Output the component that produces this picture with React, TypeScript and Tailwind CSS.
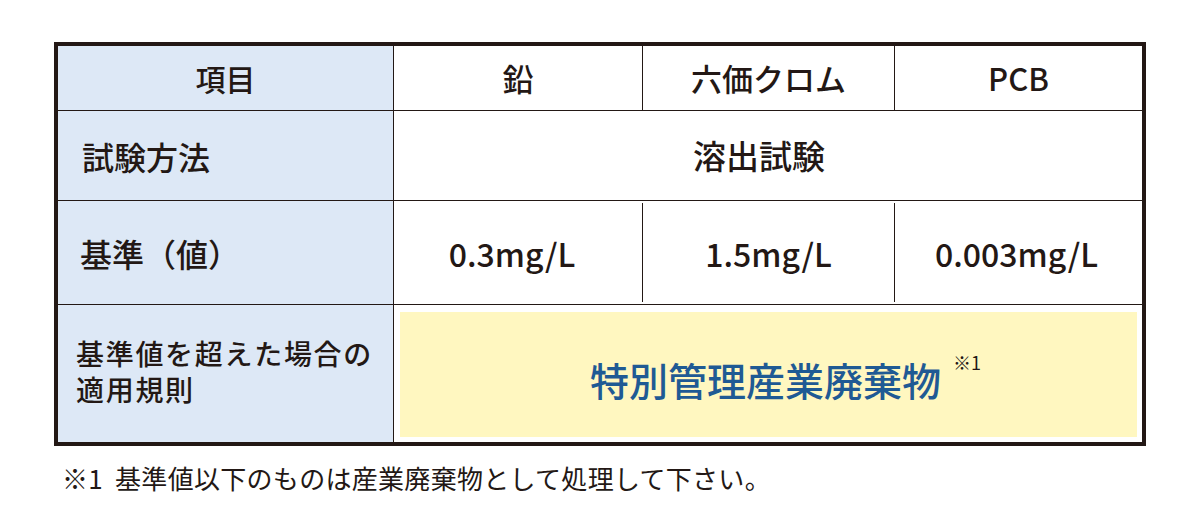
import React from "react";

const ink = "text-[#231815]";

const values = [
  { v: "0.3mg/L", pad: "pr-[12px]" },
  { v: "1.5mg/L", pad: "" },
  { v: "0.003mg/L", pad: "pr-[4px]" },
];

const App = () => {
  return (
    <div
      className={`w-[1201px] h-[529px] bg-white ${ink}`}
      style={{ fontFamily: '"Noto Sans CJK JP", "Noto Sans", sans-serif' }}
    >
      <div className="pt-[42px] pl-[54px]">
        {/* Table */}
        <div className="w-[1092px] border-[4px] border-[#231815] grid grid-cols-[336px_249px_252px_247px] grid-rows-[65px_90px_104px_137px]">
          {/* Row 1: header */}
          <div className="bg-[#dde8f6] border-r border-b border-[#231815] flex items-center justify-center text-[30px] font-medium">
            項目
          </div>
          <div className="border-r border-b border-[#231815] flex items-center justify-center text-[31px] font-medium">
            鉛
          </div>
          <div className="border-r border-b border-[#231815] flex items-center justify-center text-[31px] font-medium">
            六価クロム
          </div>
          <div className="border-b border-[#231815] flex items-center justify-center text-[31px] font-medium">
            PCB
          </div>

          {/* Row 2: test method */}
          <div className="bg-[#dde8f6] border-r border-b border-[#231815] flex items-center pl-[24px] text-[32px] font-medium">
            試験方法
          </div>
          <div className="col-span-3 border-b border-[#231815] flex items-center justify-center pr-[18px] text-[33px] font-medium">
            溶出試験
          </div>

          {/* Row 3: standard values */}
          <div className="bg-[#dde8f6] border-r border-b border-[#231815] flex items-center pl-[22px] text-[32px] font-medium">
            基準（値）
          </div>
          {values.map((item, i) => (
            <div key={item.v} className="border-b border-[#231815] flex py-[2px]">
              <div
                className={
                  i < 2
                    ? `flex-1 flex items-center justify-center border-r border-[#231815] text-[32px] font-medium ${item.pad}`
                    : `flex-1 flex items-center justify-center text-[32px] font-medium ${item.pad}`
                }
              >
                {item.v}
              </div>
            </div>
          ))}

          {/* Row 4: rule applied */}
          <div className="bg-[#dde8f6] border-r border-[#231815] flex items-center pl-[18px] pb-[6px]">
            <p className="text-[28px] leading-[36px] font-medium tracking-[1.7px]">
              基準値を超えた場合の
              <br />
              適用規則
            </p>
          </div>
          <div className="col-span-3 pt-[7px] pl-[6px] pr-[5px] pb-[5px]">
            <div className="h-full bg-[#fff7c0] flex items-center justify-center pt-[10px] pr-[6px]">
              <span className="relative text-[39px] font-medium text-[#1f5a94]">
                特別管理産業廃棄物
                <span className={`absolute left-full top-[-1px] ml-[12px] text-[18px] font-normal ${ink} whitespace-nowrap`}>
                  ※1
                </span>
              </span>
            </div>
          </div>
        </div>

        {/* Footnote */}
        <p className="mt-[15px] ml-[8px] text-[26px] leading-[34px] tracking-[0.3px]">
          ※1<span className="inline-block w-[12px]" />基準値以下のものは産業廃棄物として処理して下さい。
        </p>
      </div>
    </div>
  );
};

export default App;
